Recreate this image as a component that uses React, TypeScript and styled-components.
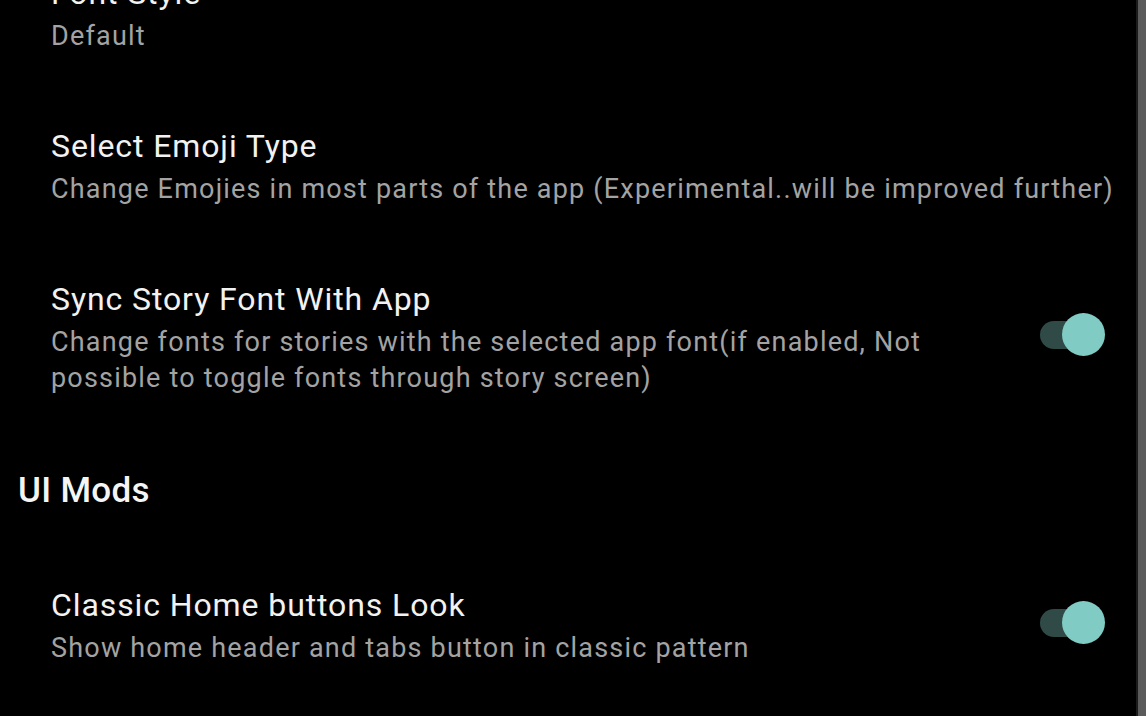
import React, { FC } from "react";
import styled, { createGlobalStyle } from "styled-components";

const GlobalStyle = createGlobalStyle`
  html, body, #root {
    margin: 0;
    height: 100%;
    background: #000;
    overflow: hidden;
  }
  body {
    font-family: Roboto, "Noto Sans", sans-serif;
    -webkit-font-smoothing: antialiased;
  }
`;

interface SettingProps {
  title: string;
  summary: string;
  checked?: boolean;
}

const Setting: FC<SettingProps> = props => {
  return (
    <Row>
      <TextBlock hasSwitch={props.checked !== undefined}>
        <Title>{props.title}</Title>
        <Summary>{props.summary}</Summary>
      </TextBlock>
      {props.checked !== undefined && (
        <Switch on={props.checked}>
          <Thumb />
        </Switch>
      )}
    </Row>
  );
};

export default function App() {
  return (
    <Screen>
      <GlobalStyle />
      <List>
        <Setting title="Font Style" summary="Default" />
        <Setting
          title="Select Emoji Type"
          summary="Change Emojies in most parts of the app (Experimental..will be improved further)"
        />
        <Setting
          title="Sync Story Font With App"
          summary="Change fonts for stories with the selected app font(if enabled, Not possible to toggle fonts through story screen)"
          checked
        />
        <Category>UI Mods</Category>
        <Setting
          title="Classic Home buttons Look"
          summary="Show home header and tabs button in classic pattern"
          checked
        />
      </List>
      <ScrollEdge />
    </Screen>
  );
}

const Screen = styled.div`
  display: flex;
  height: 100%;
  background: #000;
`;

const List = styled.div`
  flex: 1;
  display: flex;
  flex-direction: column;
  margin-top: -63px;
`;

const ScrollEdge = styled.div`
  width: 8px;
  border-left: 2px solid #1c1c1c;
  background: #5b5b5b;
`;

const Row = styled.div`
  display: flex;
  align-items: center;
  padding: 36px 18px 36px 51px;
`;

const TextBlock = styled.div<{ hasSwitch: boolean }>`
  flex: 1;
  min-width: 0;
  padding-right: ${p => (p.hasSwitch ? "100px" : "0")};
`;

const Title = styled.div`
  color: #f2f2f2;
  font-size: 32px;
  line-height: 40px;
  letter-spacing: 0.9px;
`;

const Summary = styled.div`
  margin-top: 5px;
  color: #a3a3a3;
  font-size: 27px;
  line-height: 36px;
  letter-spacing: 1.2px;
`;

const Category = styled.div`
  margin: 37px 0 36px 18px;
  color: #f5f5f5;
  font-size: 35px;
  line-height: 44px;
  font-weight: 500;
  letter-spacing: 0.3px;
`;

const Switch = styled.div<{ on: boolean }>`
  position: relative;
  flex: none;
  width: 60px;
  height: 28px;
  margin: 0 18px 6px 0;
  border-radius: 14px;
  background: ${p => (p.on ? "#2f4a47" : "#444")};
`;

const Thumb = styled.div`
  position: absolute;
  right: -5px;
  top: -8px;
  width: 43px;
  height: 43px;
  border-radius: 50%;
  background: #80cbc4;
`;
